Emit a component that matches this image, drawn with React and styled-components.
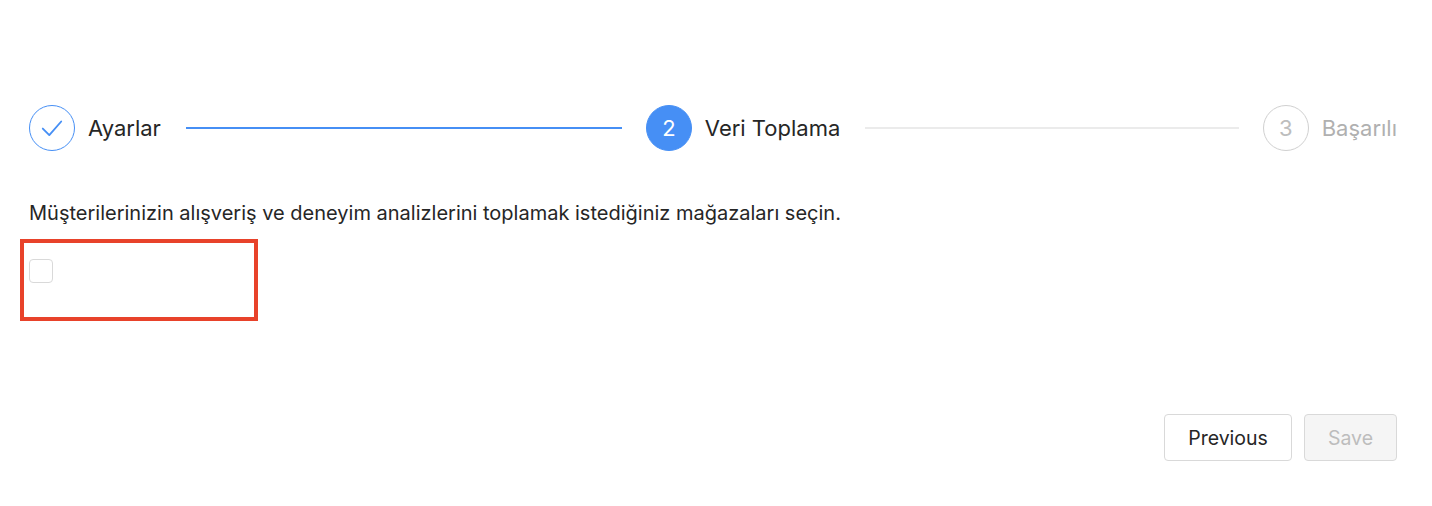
import React from 'react';
import styled, { createGlobalStyle } from 'styled-components';

const GlobalStyle = createGlobalStyle`
  html, body {
    margin: 0;
    padding: 0;
    background: #fff;
  }
  body {
    font-family: Inter, Roboto, "Liberation Sans", sans-serif;
    color: #262626;
  }
`;

const PRIMARY = '#468ff5';

const Page = styled.div`
  width: 1432px;
  height: 506px;
  box-sizing: border-box;
  padding: 105px 35px 0 29px;
  display: flex;
  flex-direction: column;
`;

const Steps = styled.div`
  display: flex;
  align-items: center;
  height: 46px;
`;

const Step = styled.div`
  display: flex;
  align-items: center;
  flex: ${({ $last }) => ($last ? 'none' : '1')};
  min-width: 0;
`;

const Icon = styled.div`
  width: 46px;
  height: 46px;
  flex: none;
  box-sizing: border-box;
  border-radius: 50%;
  display: flex;
  align-items: center;
  justify-content: center;
  font-size: 22px;
  border: 1.5px solid
    ${({ $status }) => ($status === 'wait' ? '#d0d0d0' : PRIMARY)};
  background: ${({ $status }) => ($status === 'process' ? PRIMARY : '#fff')};
  color: ${({ $status }) =>
    $status === 'process' ? '#fff' : $status === 'wait' ? '#bdbdbd' : PRIMARY};
`;

const Title = styled.div`
  margin-left: 13px;
  font-size: 22px;
  white-space: nowrap;
  color: ${({ $status }) => ($status === 'wait' ? '#b0b0b0' : '#262626')};
`;

const Tail = styled.div`
  flex: 1;
  height: 1.5px;
  margin: 0 24px 0 25px;
  background: ${({ $done }) => ($done ? PRIMARY : '#ebebeb')};
`;

const Description = styled.p`
  margin: 48px 0 0;
  font-size: 20px;
  line-height: 28px;
  color: #262626;
`;

const Highlight = styled.div`
  margin: 12px 0 0 -9px;
  width: 238px;
  height: 82px;
  box-sizing: border-box;
  border: 4px solid #e8422a;
  padding: 16px 0 0 5px;
`;

const Checkbox = styled.span`
  display: block;
  width: 24px;
  height: 24px;
  box-sizing: border-box;
  border: 1.5px solid #d9d9d9;
  border-radius: 4px;
  background: #fff;
`;

const Footer = styled.div`
  margin-top: auto;
  margin-bottom: 45px;
  display: flex;
  justify-content: flex-end;
  gap: 12px;
`;

const Button = styled.button`
  height: 47px;
  padding: 0 23px;
  font-family: inherit;
  font-size: 19.5px;
  border-radius: 4px;
  border: 1.5px solid #d9d9d9;
  background: ${({ $disabled }) => ($disabled ? '#f5f5f5' : '#fff')};
  color: ${({ $disabled }) => ($disabled ? '#bdbdbd' : '#262626')};
  cursor: ${({ $disabled }) => ($disabled ? 'not-allowed' : 'pointer')};
`;

const Check = () => (
  <svg width="26" height="26" viewBox="0 0 24 24" fill="none">
    <path
      d="M3.5 12.5 L9.5 18.5 L20.5 6"
      stroke={PRIMARY}
      strokeWidth="1.7"
      strokeLinecap="round"
      strokeLinejoin="round"
    />
  </svg>
);

const App = () => {
  return (
    <>
      <GlobalStyle />
      <Page>
        <Steps>
          <Step>
            <Icon $status="finish">
              <Check />
            </Icon>
            <Title $status="finish">Ayarlar</Title>
            <Tail $done />
          </Step>
          <Step>
            <Icon $status="process">2</Icon>
            <Title $status="process">Veri Toplama</Title>
            <Tail />
          </Step>
          <Step $last>
            <Icon $status="wait">3</Icon>
            <Title $status="wait">Başarılı</Title>
          </Step>
        </Steps>
        <Description>
          Müşterilerinizin alışveriş ve deneyim analizlerini toplamak istediğiniz mağazaları seçin.
        </Description>
        <Highlight>
          <Checkbox />
        </Highlight>
        <Footer>
          <Button>Previous</Button>
          <Button $disabled disabled>
            Save
          </Button>
        </Footer>
      </Page>
    </>
  );
};

export default App;
